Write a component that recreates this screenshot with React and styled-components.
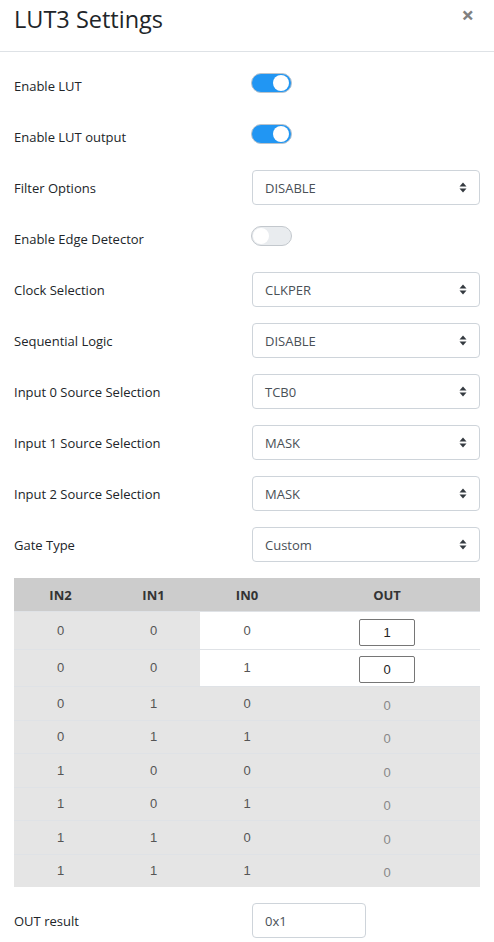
import React from "react";
import styled, { createGlobalStyle } from "styled-components";

const GlobalStyle = createGlobalStyle`
	body {
		margin: 0;
		background: #fff;
		font-family: "Open Sans", "Noto Sans", "Liberation Sans", sans-serif;
		color: #212529;
	}
`;

const Modal = styled.div`
	width: 494px;
	background: #fff;
`;

const Header = styled.div`
	display: flex;
	align-items: flex-start;
	justify-content: space-between;
	height: 52px;
	box-sizing: border-box;
	padding: 3px 14px 0 14px;
	border-bottom: 1px solid #dee2e6;
`;

const Title = styled.h4`
	margin: 0;
	font-size: 23.5px;
	font-weight: 500;
	line-height: 32px;
	color: #212529;
`;

const Close = styled.span`
	font-size: 22px;
	font-weight: 700;
	line-height: 22px;
	color: #808080;
	margin-top: 0;
	margin-right: 6px;
`;

const Body = styled.div`
	display: flex;
	flex-direction: column;
	gap: 16px;
	padding: 16px 14px;
`;

const Row = styled.div`
	display: grid;
	grid-template-columns: 238px 228px;
	align-items: center;
	height: 35px;
`;

const Label = styled.label`
	font-size: 13px;
	color: #212529;
`;

const Switch = styled.span`
	position: relative;
	display: inline-block;
	width: 41px;
	height: 20px;
	box-sizing: border-box;
	border-radius: 10px;
	border: 1px solid ${(p) => (p.on ? "#b9c3cc" : "#c3c8cd")};
	background: ${(p) => (p.on ? "#2196f3" : "#e9ecef")};
	margin-left: -1px;

	&::after {
		content: "";
		position: absolute;
		top: 1px;
		left: ${(p) => (p.on ? "21px" : "1px")};
		width: 16px;
		height: 16px;
		border-radius: 50%;
		background: #fff;
	}
`;

const Select = styled.div`
	display: flex;
	align-items: center;
	justify-content: space-between;
	height: 35px;
	box-sizing: border-box;
	padding: 0 12px 0 12px;
	border: 1px solid #ced4da;
	border-radius: 4px;
	font-size: 13px;
	color: #495057;
`;

const Caret = () => (
	<svg width="8" height="11" viewBox="0 0 8 11">
		<path d="M4 0.5 L7.5 4.5 H0.5 Z" fill="#343a40" />
		<path d="M4 10.5 L7.5 6.5 H0.5 Z" fill="#343a40" />
	</svg>
);

const Table = styled.table`
	width: 466px;
	border-collapse: collapse;
	table-layout: fixed;
	font-family: "Liberation Sans", Arial, sans-serif;
	font-size: 13px;
`;

const Th = styled.th`
	background: #cccccc;
	height: 33px;
	padding: 0;
	font-family: "Open Sans", "Noto Sans", sans-serif;
	font-weight: 700;
	font-size: 13px;
	color: #333;
`;

const Tr = styled.tr`
	border-top: 1px solid #dfe2e6;
`;

const Td = styled.td`
	background: ${(p) => (p.white ? "#fff" : "#e5e5e5")};
	text-align: center;
	color: #555;
	padding: 0;
	height: ${(p) => (p.tall ? "36.5px" : "32.5px")};
	vertical-align: middle;
`;

const Dim = styled.span`
	color: #888;
	position: relative;
	top: 2px;
`;

const BitInput = styled.div`
	display: inline-flex;
	align-items: center;
	justify-content: center;
	width: 56px;
	height: 27px;
	box-sizing: border-box;
	border: 1px solid #767676;
	border-radius: 2px;
	color: #222;
	margin-top: 4px;
`;

const TextInput = styled.div`
	display: flex;
	align-items: center;
	width: 114px;
	height: 35px;
	box-sizing: border-box;
	padding: 0 12px;
	border: 1px solid #ced4da;
	border-radius: 4px;
	font-size: 13px;
	color: #495057;
`;

const settings = [
	{ label: "Enable LUT", type: "switch", on: true },
	{ label: "Enable LUT output", type: "switch", on: true },
	{ label: "Filter Options", type: "select", value: "DISABLE" },
	{ label: "Enable Edge Detector", type: "switch", on: false },
	{ label: "Clock Selection", type: "select", value: "CLKPER" },
	{ label: "Sequential Logic", type: "select", value: "DISABLE" },
	{ label: "Input 0 Source Selection", type: "select", value: "TCB0" },
	{ label: "Input 1 Source Selection", type: "select", value: "MASK" },
	{ label: "Input 2 Source Selection", type: "select", value: "MASK" },
	{ label: "Gate Type", type: "select", value: "Custom" },
];

const truth = [
	[0, 0, 0, 1],
	[0, 0, 1, 0],
	[0, 1, 0, 0],
	[0, 1, 1, 0],
	[1, 0, 0, 0],
	[1, 0, 1, 0],
	[1, 1, 0, 0],
	[1, 1, 1, 0],
];

export default function App() {
	return (
		<Modal>
			<GlobalStyle />
			<Header>
				<Title>LUT3 Settings</Title>
				<Close>×</Close>
			</Header>
			<Body>
				{settings.map((s) => (
					<Row key={s.label}>
						<Label>{s.label}</Label>
						{s.type === "switch" ? (
							<div>
								<Switch on={s.on ? 1 : 0} />
							</div>
						) : (
							<Select>
								<span>{s.value}</span>
								<Caret />
							</Select>
						)}
					</Row>
				))}
				<Table>
					<colgroup>
						<col style={{ width: "93px" }} />
						<col style={{ width: "93px" }} />
						<col style={{ width: "94px" }} />
						<col style={{ width: "186px" }} />
					</colgroup>
					<thead>
						<tr>
							<Th>IN2</Th>
							<Th>IN1</Th>
							<Th>IN0</Th>
							<Th>OUT</Th>
						</tr>
					</thead>
					<tbody>
						{truth.map((r, i) => {
							const editable = i < 2;
							return (
								<Tr key={i}>
									<Td tall={editable}>{r[0]}</Td>
									<Td tall={editable}>{r[1]}</Td>
									<Td tall={editable} white={editable}>
										{r[2]}
									</Td>
									<Td tall={editable} white={editable}>
										{editable ? (
											<BitInput>{r[3]}</BitInput>
										) : (
											<Dim>{r[3]}</Dim>
										)}
									</Td>
								</Tr>
							);
						})}
					</tbody>
				</Table>
				<Row>
					<Label>OUT result</Label>
					<TextInput>0x1</TextInput>
				</Row>
			</Body>
		</Modal>
	);
}
